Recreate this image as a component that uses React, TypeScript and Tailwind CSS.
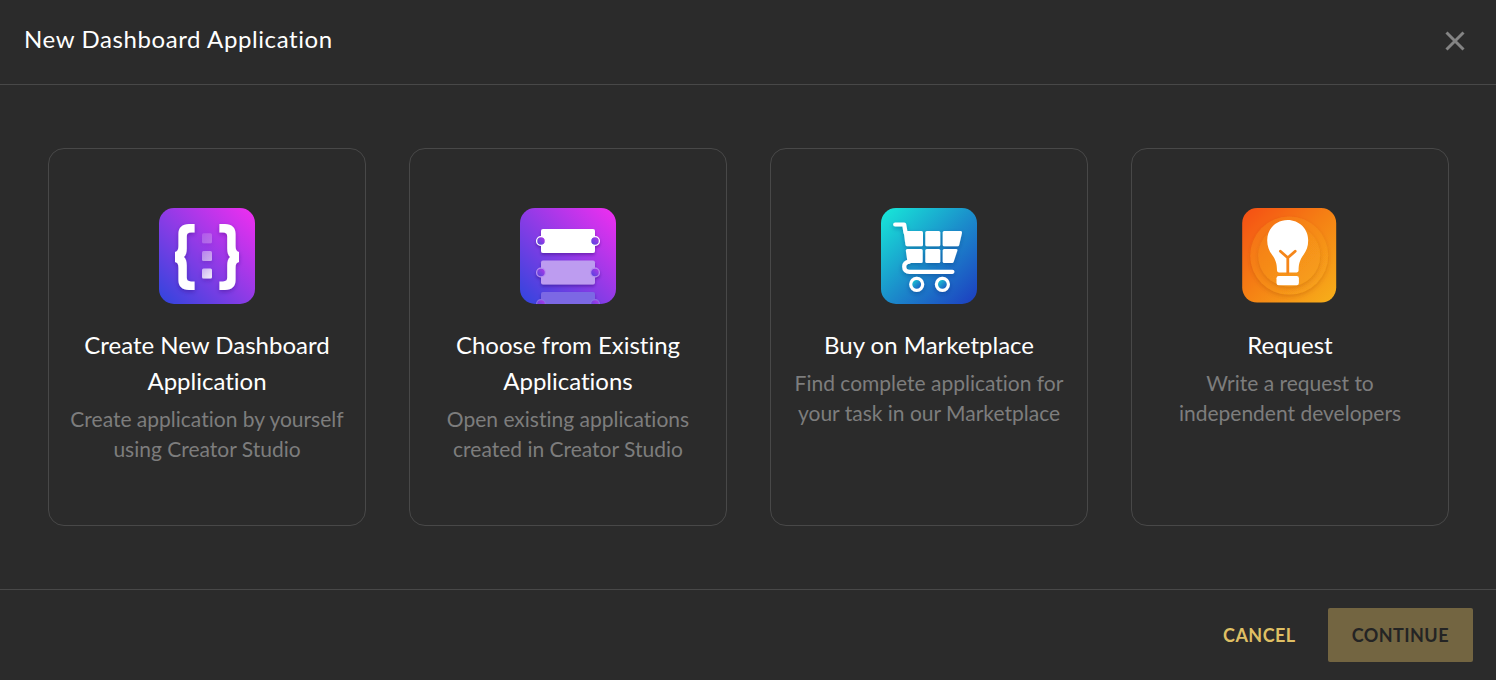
import { useState } from "react";
import type { ReactNode } from "react";

interface Option {
  id: string;
  title: string;
  description: string;
  icon: ReactNode;
}

function BracesIcon() {
  const brace =
    "M35.6 16H30C23 16 19.4 19.8 19.4 26V38C19.4 41.6 18.6 43.4 16 43.9V54.1C18.6 54.6 19.4 56.4 19.4 60V72C19.4 78.2 23 82 30 82H35.6V73.4H32C29 73.4 27.8 72.2 27.8 69.6V57.5C27.8 53.5 27 51 25 49C27 47 27.8 44.5 27.8 40.5V28.4C27.8 25.8 29 24.6 32 24.6H35.6Z";
  return (
    <svg className="size-24" viewBox="0 0 96 96" aria-hidden="true">
      <defs>
        <linearGradient id="braces-bg" x1="0" y1="1" x2="1" y2="0">
          <stop offset="0" stopColor="#2f45dd" />
          <stop offset="0.5" stopColor="#8f3be6" />
          <stop offset="1" stopColor="#f22ef0" />
        </linearGradient>
        <linearGradient id="braces-dot" x1="0" y1="0" x2="1" y2="1">
          <stop offset="0" stopColor="#fff" stopOpacity="0.65" />
          <stop offset="1" stopColor="#fff" />
        </linearGradient>
        <filter id="braces-shadow" x="-20%" y="-20%" width="140%" height="140%">
          <feDropShadow dx="0" dy="2" stdDeviation="2" floodColor="#2a1070" floodOpacity="0.35" />
        </filter>
      </defs>
      <rect width="96" height="96" rx="15" fill="url(#braces-bg)" />
      <g fill="#fff" filter="url(#braces-shadow)">
        <path d={brace} />
        <path d={brace} transform="matrix(-1 0 0 1 96 0)" />
        <rect x="43" y="25.3" width="10" height="10" rx="1.5" fill="url(#braces-dot)" opacity="0.25" />
        <rect x="43" y="43" width="10" height="10" rx="1.5" fill="url(#braces-dot)" opacity="0.55" />
        <rect x="43" y="60.5" width="10" height="10" rx="1.5" fill="url(#braces-dot)" opacity="0.9" />
      </g>
    </svg>
  );
}

function StackIcon() {
  return (
    <svg className="size-24" viewBox="0 0 96 96" aria-hidden="true">
      <defs>
        <linearGradient id="stack-bg" x1="0" y1="1" x2="1" y2="0">
          <stop offset="0" stopColor="#2f45dd" />
          <stop offset="0.5" stopColor="#8f3be6" />
          <stop offset="1" stopColor="#f22ef0" />
        </linearGradient>
        <linearGradient id="stack-dot" x1="0" y1="1" x2="1" y2="0">
          <stop offset="0" stopColor="#4a45dd" />
          <stop offset="1" stopColor="#b838e8" />
        </linearGradient>
        <clipPath id="stack-clip">
          <rect width="96" height="96" rx="15" />
        </clipPath>
        <filter id="stack-shadow" x="-20%" y="-20%" width="140%" height="150%">
          <feDropShadow dx="0" dy="2" stdDeviation="1.5" floodColor="#2a1070" floodOpacity="0.4" />
        </filter>
      </defs>
      <g clipPath="url(#stack-clip)">
        <rect width="96" height="96" fill="url(#stack-bg)" />
        {[
          { y: 21, fill: "#ffffff", ring: "#ffffff" },
          { y: 52.5, fill: "#bd9cf0", ring: "#b68df0" },
          { y: 84, fill: "#7b68e4", ring: "#8a6fe6" },
        ].map((row) => (
          <g key={row.y} filter="url(#stack-shadow)">
            <rect x="21" y={row.y} width="54" height="24" rx="2" fill={row.fill} />
            <circle cx="21" cy={row.y + 12} r="4.4" fill="url(#stack-dot)" stroke={row.ring} strokeWidth="1.3" />
            <circle cx="75" cy={row.y + 12} r="4.4" fill="url(#stack-dot)" stroke={row.ring} strokeWidth="1.3" />
          </g>
        ))}
      </g>
    </svg>
  );
}

function CartIcon() {
  return (
    <svg className="size-24" viewBox="0 0 96 96" aria-hidden="true">
      <defs>
        <linearGradient id="cart-bg" x1="0" y1="0" x2="1" y2="1">
          <stop offset="0" stopColor="#17ead9" />
          <stop offset="0.5" stopColor="#1b8fcb" />
          <stop offset="1" stopColor="#1d3cc0" />
        </linearGradient>
        <filter id="cart-shadow" x="-20%" y="-20%" width="140%" height="140%">
          <feDropShadow dx="0" dy="2" stdDeviation="2" floodColor="#0a2a70" floodOpacity="0.35" />
        </filter>
      </defs>
      <rect width="96" height="96" rx="15" fill="url(#cart-bg)" />
      <g filter="url(#cart-shadow)">
        <g fill="none" stroke="#fff" strokeWidth="4.2" strokeLinecap="round" strokeLinejoin="round">
          <path d="M14.2 16.5H23.2L24.6 25" />
          <path d="M28.5 53.6C25 54 23.2 56 23.2 58.7C23.2 61.8 25.2 63.8 28.5 63.8H71.4" />
        </g>
        <g fill="#fff">
          <path d="M22.6 23.1H40.5Q42 23.1 42 24.6V36.7Q42 38.2 40.5 38.2H26Q24.6 38.2 24.4 36.8Z" />
          <path d="M26.3 41H40.2Q41.7 41 41.7 42.5V53.5Q41.7 55 40.2 55H28Q26.6 55 26.4 53.6L24.8 42.5Q24.8 41 26.3 41Z" />
          <rect x="44.3" y="23.1" width="15" height="15.1" rx="1.5" />
          <rect x="44.3" y="41" width="15" height="14" rx="1.5" />
          <path d="M63.2 23.1H79.6Q81.4 23.1 81 24.9L78.2 37Q77.9 38.2 76.7 38.2H63.2Q61.7 38.2 61.7 36.7V24.6Q61.7 23.1 63.2 23.1Z" />
          <path d="M63.2 41H75Q76.8 41 76.4 42.6L72.7 53.8Q72.3 55 71.1 55H63.2Q61.7 55 61.7 53.5V42.5Q61.7 41 63.2 41Z" />
        </g>
        <g fill="url(#cart-bg)" stroke="#fff" strokeWidth="3.2">
          <circle cx="35.7" cy="76.3" r="6" />
          <circle cx="61.4" cy="76.3" r="6" />
        </g>
      </g>
    </svg>
  );
}

function BulbIcon() {
  return (
    <svg className="size-24" viewBox="1 0 96 96" aria-hidden="true">
      <defs>
        <linearGradient id="bulb-bg" x1="0" y1="0" x2="1" y2="1">
          <stop offset="0" stopColor="#f54e14" />
          <stop offset="0.5" stopColor="#f58214" />
          <stop offset="1" stopColor="#f7b01a" />
        </linearGradient>
        <linearGradient id="bulb-disc" x1="0" y1="0" x2="1" y2="1">
          <stop offset="0" stopColor="#f56c15" />
          <stop offset="1" stopColor="#f7a81b" />
        </linearGradient>
        <linearGradient id="bulb-core" x1="0" y1="0" x2="1" y2="1">
          <stop offset="0" stopColor="#f57a17" />
          <stop offset="1" stopColor="#f7a21b" />
        </linearGradient>
        <filter id="bulb-shadow" x="-20%" y="-20%" width="140%" height="140%">
          <feDropShadow dx="0" dy="2" stdDeviation="2" floodColor="#a03c00" floodOpacity="0.28" />
        </filter>
      </defs>
      <rect x="1.2" width="94" height="94.6" rx="15" fill="url(#bulb-bg)" />
      <circle cx="48.2" cy="47.6" r="39" fill="url(#bulb-disc)" filter="url(#bulb-shadow)" />
      <circle cx="48.2" cy="47.6" r="31" fill="url(#bulb-core)" filter="url(#bulb-shadow)" />
      <g fill="#fff">
        <path d="M46.7 12C35.2 12 26.2 20.8 26.2 32.2C26.2 38.5 28.2 42.8 31.2 47C34.8 52 36 56 36 62.6Q36 64.4 37.8 64.4H55.8Q57.6 64.4 57.6 62.6C57.6 56 58.8 52 62.4 47C65.4 42.8 67.2 38.5 67.2 32.2C67.2 20.8 58.2 12 46.7 12Z" />
        <rect x="35.5" y="68" width="22.4" height="9.2" rx="2.2" />
      </g>
      <path
        d="M39.4 43.2L46.8 49.8L54.2 43.2M46.8 49.8V65"
        fill="none"
        stroke="#f5861a"
        strokeWidth="2.8"
        strokeLinecap="round"
        strokeLinejoin="round"
      />
    </svg>
  );
}

const options: Option[] = [
  {
    id: "create",
    title: "Create New Dashboard Application",
    description: "Create application by yourself using Creator Studio",
    icon: <BracesIcon />,
  },
  {
    id: "existing",
    title: "Choose from Existing Applications",
    description: "Open existing applications created in Creator Studio",
    icon: <StackIcon />,
  },
  {
    id: "marketplace",
    title: "Buy on Marketplace",
    description: "Find complete application for your task in our Marketplace",
    icon: <CartIcon />,
  },
  {
    id: "request",
    title: "Request",
    description: "Write a request to independent developers",
    icon: <BulbIcon />,
  },
];

export default function App() {
  const [selected, setSelected] = useState<string | null>(null);

  return (
    <div className="flex min-h-screen flex-col bg-[#2b2b2b] font-['Lato',sans-serif] text-white [font-variant-ligatures:none]">
      <header className="flex items-start justify-between border-b border-[#484848] pt-[21px] pr-[21px] pb-[23px] pl-6">
        <h1 className="text-2xl leading-9 tracking-wide">New Dashboard Application</h1>
        <button type="button" aria-label="Close" className="p-2.5 text-[#848484] hover:text-white">
          <svg className="size-5" viewBox="0 0 20 20" fill="none" stroke="currentColor" strokeWidth="3" aria-hidden="true">
            <path d="M1.5 1.5L18.5 18.5M18.5 1.5L1.5 18.5" />
          </svg>
        </button>
      </header>

      <main className="grid flex-1 grid-cols-4 gap-[43px] py-[63px] pr-[47px] pl-12">
        {options.map((option) => (
          <button
            key={option.id}
            type="button"
            aria-pressed={selected === option.id}
            onClick={() => setSelected(option.id)}
            className={`flex flex-col items-center rounded-2xl border px-4 pt-[59px] pb-15 text-center ${
              selected === option.id ? "border-[#dfbf64]" : "border-[#484848]"
            }`}
          >
            {option.icon}
            <span className="mt-[23px] text-2xl leading-9">{option.title}</span>
            <span className="mt-[5px] text-[21px] leading-[30px] text-[#7d7d7d]">{option.description}</span>
          </button>
        ))}
      </main>

      <footer className="flex items-center justify-end gap-2 border-t border-[#484848] py-[18px] pr-[23px] pl-6">
        <button type="button" className="h-[54px] px-6 text-lg font-bold tracking-wide text-[#dfbf64]">
          CANCEL
        </button>
        <button
          type="button"
          disabled={!selected}
          className="h-[54px] rounded-xs bg-[#dfbf64] px-6 text-lg font-bold tracking-wide text-[#242424] disabled:bg-[#736541]"
        >
          CONTINUE
        </button>
      </footer>
    </div>
  );
}
